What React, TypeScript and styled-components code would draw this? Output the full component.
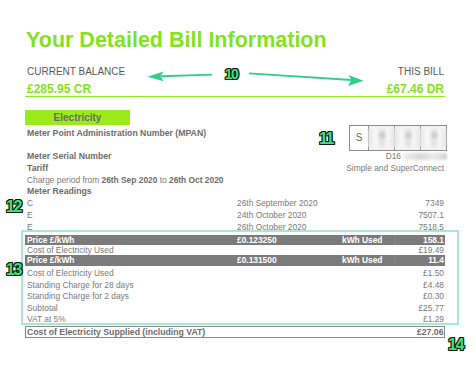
import React from "react";
import styled, { createGlobalStyle } from "styled-components";

const Global = createGlobalStyle`
  html, body { margin: 0; padding: 0; background: #fff; }
  body { font-family: "Liberation Sans", Arial, Helvetica, sans-serif; }
`;

const LIME = "#82e31c";
const TEXT = "#7a7a7a";
const BOLD = "#6c6c6c";

const Page = styled.div`
  position: relative;
  width: 474px;
  height: 366px;
  overflow: hidden;
  box-sizing: border-box;
  padding: 0 29px 0 25px;
  background: #fff;
`;

const Title = styled.h1`
  margin: 0;
  padding: 27px 0 0 1px;
  font-size: 21.5px;
  line-height: 26px;
  font-weight: bold;
  color: ${LIME};
`;

const BalanceRow = styled.div`
  display: flex;
  justify-content: space-between;
  margin-top: 13px;
  padding: 0 1px 0 2px;
  border-bottom: 1px solid #8de82a;
`;

const BalanceCol = styled.div<{ $right?: boolean }>`
  display: flex;
  flex-direction: column;
  align-items: ${(p) => (p.$right ? "flex-end" : "flex-start")};
`;

const BalanceLabel = styled.div`
  font-size: 10px;
  line-height: 12px;
  color: #5a5a5a;
`;

const BalanceAmount = styled.div`
  margin-top: 4px;
  font-size: 12px;
  line-height: 14px;
  font-weight: bold;
  color: ${LIME};
`;

const Tab = styled.div`
  margin-top: 13px;
  width: 105px;
  height: 15px;
  background: #9aea1c;
  color: #6a6a6a;
  font-weight: bold;
  font-size: 10px;
  line-height: 15px;
  text-align: center;
`;

const InfoGrid = styled.div`
  margin-top: 2.5px;
  display: grid;
  grid-template-columns: 1fr auto;
  grid-auto-rows: 11.75px;
  padding: 0 1px 0 2px;
  font-size: 8.4px;
  line-height: 11.75px;
  color: ${TEXT};
`;

const Label = styled.div<{ $span?: boolean }>`
  font-weight: bold;
  font-size: 8.7px;
  color: ${BOLD};
  grid-column: ${(p) => (p.$span ? "1 / span 2" : "auto")};
  white-space: nowrap;
`;

const Plain = styled.div<{ $span?: boolean }>`
  grid-column: ${(p) => (p.$span ? "1 / span 2" : "auto")};
  white-space: nowrap;
  b { color: ${BOLD}; }
`;

const RightCell = styled.div`
  justify-self: end;
  display: flex;
  align-items: center;
  white-space: nowrap;
`;

const MpanBox = styled.div`
  grid-column: 2;
  grid-row: 1 / span 2;
  justify-self: end;
  margin-top: -2.5px;
  margin-right: -3px;
  width: 98px;
  height: 26px;
  box-sizing: border-box;
  border: 1px solid #8c8c8c;
  display: flex;
`;

const SCell = styled.div`
  width: 18px;
  border-right: 1px solid #8c8c8c;
  display: flex;
  align-items: center;
  justify-content: center;
  font-size: 10px;
  color: #666;
`;

const Segment = styled.div<{ $first?: boolean }>`
  flex: 1;
  display: flex;
  flex-direction: column;
  border-left: ${(p) => (p.$first ? "none" : "1px solid #9a9a9a")};
  background: #f2f2f2;
`;

const BlurFill = styled.div`
  flex: 1;
  margin: 3px 0 3px -1px;
  background:
    radial-gradient(circle at 55% 35%, #cfcfcf 0 3px, transparent 4px),
    linear-gradient(90deg, #e4e4e4 0%, #fafafa 30%, #e0e0e0 55%, #f7f7f7 75%, #e6e6e6 100%);
  filter: blur(1.3px);
`;

const Redacted = styled.span`
  display: inline-block;
  width: 44px;
  height: 7px;
  margin: 0 -3px 0 2px;
  background: linear-gradient(90deg, #f0f0f0, #d8d8d8 40%, #ececec 70%, #d2d2d2);
  filter: blur(1px);
`;

const ReadingRow = styled.div`
  grid-column: 1 / span 2;
  display: grid;
  grid-template-columns: 210px 1fr auto;
`;

const Table = styled.div`
  margin-top: 1.75px;
  display: flex;
  flex-direction: column;
  font-size: 8.4px;
  color: ${TEXT};
`;

const PriceRow = styled.div<{ $h: number }>`
  display: grid;
  grid-template-columns: 210px 105px 52px 1fr;
  height: ${(p) => p.$h}px;
  line-height: ${(p) => p.$h}px;
  padding-left: 2px;
  background: #7b7b7b;
  color: #fff;
  font-weight: bold;
`;

const PriceValue = styled.div`
  text-align: right;
  padding-right: 1px;
  border-left: 1px solid #868686;
`;

const LineRow = styled.div<{ $h: number; $gap?: number }>`
  display: flex;
  justify-content: space-between;
  height: ${(p) => p.$h}px;
  line-height: ${(p) => p.$h}px;
  margin-top: ${(p) => p.$gap ?? 0}px;
  padding: 0 1px 0 2px;
`;

const TotalRow = styled.div`
  display: flex;
  justify-content: space-between;
  align-items: center;
  height: 12.5px;
  box-sizing: border-box;
  border: 1.5px solid #8a8a8a;
  border-right-width: 1px;
  padding: 0 0.5px 0 1px;
  font-weight: bold;
  color: ${BOLD};
  font-size: 8.7px;
`;

const Overlay = styled.svg`
  position: absolute;
  left: 0;
  top: 0;
  pointer-events: none;
`;

const Badge = styled.span<{ $x: number; $y: number; $size: number }>`
  position: absolute;
  left: ${(p) => p.$x}px;
  top: ${(p) => p.$y}px;
  transform: translate(-50%, -50%);
  font-family: "Liberation Sans", Arial, sans-serif;
  font-weight: bold;
  font-size: ${(p) => p.$size}px;
  line-height: 1;
  letter-spacing: -1.5px;
  color: #3fe07e;
  text-shadow: 1px 0 #0c1a10, -1px 0 #0c1a10, 0 1px #0c1a10, 0 -1px #0c1a10,
    1px 1px #0c1a10, -1px -1px #0c1a10, 1px -1px #0c1a10, -1px 1px #0c1a10;
`;

const readings = [
  ["C", "26th September 2020", "7349"],
  ["E", "24th October 2020", "7507.1"],
  ["E", "26th October 2020", "7518.5"],
];

const charges: [string, string][] = [
  ["Cost of Electricity Used", "£1.50"],
  ["Standing Charge for 28 days", "£4.48"],
  ["Standing Charge for 2 days", "£0.30"],
  ["Subtotal", "£25.77"],
  ["VAT at 5%", "£1.29"],
];

export default function App() {
  return (
    <>
      <Global />
      <Page>
        <Title>Your Detailed Bill Information</Title>
        <BalanceRow>
          <BalanceCol>
            <BalanceLabel>CURRENT BALANCE</BalanceLabel>
            <BalanceAmount>£285.95 CR</BalanceAmount>
          </BalanceCol>
          <BalanceCol $right>
            <BalanceLabel>THIS BILL</BalanceLabel>
            <BalanceAmount>£67.46 DR</BalanceAmount>
          </BalanceCol>
        </BalanceRow>
        <Tab>Electricity</Tab>
        <InfoGrid>
          <Label>Meter Point Administration Number (MPAN)</Label>
          <MpanBox>
            <SCell>S</SCell>
            {[0, 1, 2].map((i) => (
              <Segment key={i} $first={i === 0}>
                <BlurFill />
              </Segment>
            ))}
          </MpanBox>
          <Plain />
          <Label>Meter Serial Number</Label>
          <RightCell>
            D16
            <Redacted />
          </RightCell>
          <Label>Tariff</Label>
          <RightCell>Simple and SuperConnect</RightCell>
          <Plain $span>
            Charge period from <b>26th Sep 2020</b> to <b>26th Oct 2020</b>
          </Plain>
          <Label $span>Meter Readings</Label>
          {readings.map(([r, d, v], i) => (
            <ReadingRow key={i}>
              <span>{r}</span>
              <span>{d}</span>
              <span>{v}</span>
            </ReadingRow>
          ))}
        </InfoGrid>
        <Table>
          <PriceRow $h={10}>
            <span>Price £/kWh</span>
            <span>£0.123250</span>
            <span>kWh Used</span>
            <PriceValue>158.1</PriceValue>
          </PriceRow>
          <LineRow $h={10}>
            <span>Cost of Electricity Used</span>
            <span>£19.49</span>
          </LineRow>
          <PriceRow $h={11}>
            <span>Price £/kWh</span>
            <span>£0.131500</span>
            <span>kWh Used</span>
            <PriceValue>11.4</PriceValue>
          </PriceRow>
          {charges.map(([l, v], i) => (
            <LineRow key={i} $h={11.5} $gap={i === 0 ? 2.25 : 0}>
              <span>{l}</span>
              <span>{v}</span>
            </LineRow>
          ))}
          <TotalRow>
            <span>Cost of Electricity Supplied (including VAT)</span>
            <span>£27.06</span>
          </TotalRow>
        </Table>

        <Overlay width="474" height="366" viewBox="0 0 474 366">
          <rect x="22" y="231" width="436" height="93" fill="none" stroke="#8ddfca" strokeWidth="1.5" />
          <g fill="#2fcf8a" stroke="none">
            <polygon points="212,73.8 212,75.6 161,77.2 161,75.2" />
            <polygon points="147.5,76.7 163.5,71.5 160.5,76.3 163.5,81.2" />
            <polygon points="249,72.6 249,74.2 352,80.9 352,79" />
            <polygon points="363.5,80.8 348.5,75 351.5,80 348,86" />
          </g>
        </Overlay>
        <Badge $x={231} $y={73.5} $size={14}>10</Badge>
        <Badge $x={326} $y={138.5} $size={16}>11</Badge>
        <Badge $x={13.5} $y={206.5} $size={16}>12</Badge>
        <Badge $x={13.5} $y={270} $size={16}>13</Badge>
        <Badge $x={455.5} $y={345} $size={16}>14</Badge>
      </Page>
    </>
  );
}
